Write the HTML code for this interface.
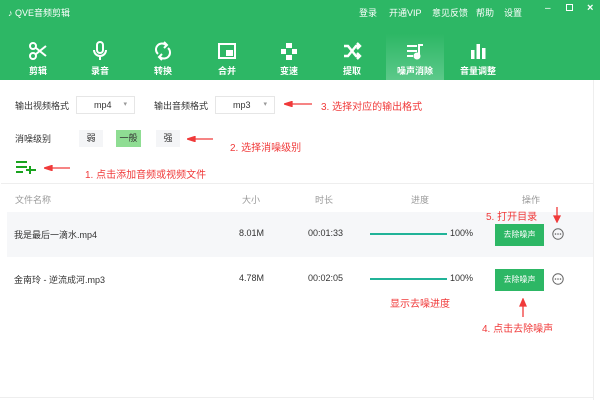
<!DOCTYPE html>
<html><head><meta charset="utf-8"><style>
*{margin:0;padding:0;box-sizing:border-box}
body{width:600px;height:400px;overflow:hidden;background:#fff;font-family:"Liberation Sans","Noto Sans CJK SC",sans-serif;position:relative;font-size:9px;color:#333}
.a{position:absolute;white-space:nowrap}
.hd{position:absolute;left:0;top:0;width:600px;height:80px;background:#2db765;color:#fff}
.tab{position:absolute;top:34px;width:58px;height:46px;text-align:center;font-size:9px;font-weight:bold;color:#fff}
.tab svg{display:block;margin:7px auto 3px}
.red{color:#f03a3a;font-size:10px}
.sel{position:absolute;height:18px;border:1px solid #e6e6e6;background:#fff;font-size:9px;line-height:16px;padding-left:17px}
.sel:after{content:"▾";position:absolute;right:7px;color:#999;font-size:7px}
.btn{position:absolute;width:49px;height:22px;background:#2db765;color:#fff;font-size:8px;text-align:center;line-height:22px}
.bar{position:absolute;height:2px;background:#21b398;width:77px}
.gray{color:#999}
</style></head><body>
<div class="hd">
<div class="a" style="left:8px;top:6px;font-size:9px">♪ QVE音频剪辑</div>
<div class="a" style="left:359px;top:6px;font-size:9px">登录</div>
<div class="a" style="left:389px;top:6px;font-size:9px">开通VIP</div>
<div class="a" style="left:432px;top:6px;font-size:9px">意见反馈</div>
<div class="a" style="left:476px;top:6px;font-size:9px">帮助</div>
<div class="a" style="left:504px;top:6px;font-size:9px">设置</div>
<div class="a" style="left:545px;top:3px;font-size:10px">–</div>
<div class="a" style="left:566px;top:4px;width:7px;height:7px;border:1px solid #fff"></div>
<div class="a" style="left:587px;top:2px;font-size:11px;font-weight:bold">×</div>
<div class="tab" style="left:9px"><svg width="20" height="20" viewBox="0 0 20 20" fill="none" stroke="#fff" stroke-width="2"><circle cx="5" cy="5" r="3"/><circle cx="5" cy="15" r="3"/><path d="M8 7L18 15M8 13L18 5"/></svg>剪辑</div>
<div class="tab" style="left:71px"><svg width="20" height="20" viewBox="0 0 20 20" fill="none" stroke="#fff" stroke-width="2"><rect x="7" y="1" width="6" height="11" rx="3"/><path d="M4 9a6 6 0 0 0 12 0M10 15v4"/></svg>录音</div>
<div class="tab" style="left:134px"><svg width="20" height="20" viewBox="0 0 20 20" fill="none" stroke="#fff" stroke-width="2"><path d="M5 13A6 6 0 0 1 13 4M15 7a6 6 0 0 1-8 9"/><path d="M11 1l3 3-3 3M9 19l-3-3 3-3"/></svg>转换</div>
<div class="tab" style="left:198px"><svg width="20" height="20" viewBox="0 0 20 20" fill="none" stroke="#fff" stroke-width="2"><rect x="2" y="3" width="16" height="14"/><rect x="10" y="10" width="5" height="4" fill="#fff"/></svg>合并</div>
<div class="tab" style="left:260px"><svg width="20" height="20" viewBox="0 0 20 20" fill="#fff"><rect x="7" y="2" width="6" height="5"/><rect x="2" y="8" width="5" height="5"/><rect x="13" y="8" width="5" height="5"/><rect x="7" y="14" width="6" height="5"/></svg>变速</div>
<div class="tab" style="left:323px"><svg width="20" height="20" viewBox="0 0 20 20" fill="none" stroke="#fff" stroke-width="2.4"><path d="M2 5h4l8 10h3M2 15h4l8-10h3M15 2l3 3-3 3M15 12l3 3-3 3"/></svg>提取</div>
<div class="tab" style="left:386px;background:linear-gradient(#2db765,#5cc98a)"><svg width="20" height="20" viewBox="0 0 20 20" fill="none" stroke="#fff" stroke-width="2"><path d="M2 5h10M2 10h10M2 15h6M14 15V4h4"/><circle cx="12" cy="15" r="2.5" fill="#fff"/></svg>噪声消除</div>
<div class="tab" style="left:449px"><svg width="20" height="20" viewBox="0 0 20 20" fill="#fff"><rect x="3" y="9" width="3.5" height="9"/><rect x="8.5" y="3" width="3.5" height="15"/><rect x="14" y="7" width="3.5" height="11"/></svg>音量调整</div>
</div>
<div class="a" style="left:15px;top:99px">输出视频格式</div>
<div class="sel" style="left:76px;top:96px;width:59px">mp4</div>
<div class="a" style="left:154px;top:99px">输出音频格式</div>
<div class="sel" style="left:215px;top:96px;width:60px">mp3</div>
<svg class="a" style="left:284px;top:101px" width="28" height="6"><path d="M0 3L8 0.5V5.5Z M6 3H28" fill="#f03a3a" stroke="#f03a3a" stroke-width="1.3"/></svg>
<div class="a red" style="left:321px;top:98px">3. 选择对应的输出格式</div>
<div class="a" style="left:15px;top:132px">消噪级别</div>
<div class="a" style="left:79px;top:130px;width:24px;height:17px;background:#f4f5f7;text-align:center;line-height:17px">弱</div>
<div class="a" style="left:116px;top:130px;width:25px;height:17px;background:#8fdd93;text-align:center;line-height:17px">一般</div>
<div class="a" style="left:156px;top:130px;width:24px;height:17px;background:#f4f5f7;text-align:center;line-height:17px">强</div>
<svg class="a" style="left:187px;top:136px" width="26" height="6"><path d="M0 3L8 0.5V5.5Z M6 3H26" fill="#f03a3a" stroke="#f03a3a" stroke-width="1.3"/></svg>
<div class="a red" style="left:230px;top:139px">2. 选择消噪级别</div>
<svg class="a" style="left:15px;top:160px" width="22" height="14" viewBox="0 0 22 14" fill="none" stroke="#1aa31f" stroke-width="2"><path d="M1 2h11M1 7h11M1 12h7M15 6v8M11 10h10"/></svg>
<svg class="a" style="left:44px;top:165px" width="26" height="6"><path d="M0 3L8 0.5V5.5Z M6 3H26" fill="#f03a3a" stroke="#f03a3a" stroke-width="1.3"/></svg>
<div class="a red" style="left:85px;top:166px">1. 点击添加音频或视频文件</div>
<div class="a" style="left:1px;top:183px;width:592px;height:1px;background:#eee"></div>
<div class="a gray" style="left:15px;top:193px">文件名称</div>
<div class="a gray" style="left:242px;top:193px">大小</div>
<div class="a gray" style="left:315px;top:193px">时长</div>
<div class="a gray" style="left:411px;top:193px">进度</div>
<div class="a gray" style="left:522px;top:193px">操作</div>
<div class="a" style="left:7px;top:212px;width:586px;height:45px;background:#f6f7f9"></div>
<div class="a" style="left:14px;top:228px">我是最后一滴水.mp4</div>
<div class="a" style="left:239px;top:228px">8.01M</div>
<div class="a" style="left:308px;top:228px">00:01:33</div>
<div class="bar" style="left:370px;top:233px"></div>
<div class="a" style="left:450px;top:228px">100%</div>
<div class="btn" style="left:495px;top:224px">去除噪声</div>
<svg class="a" style="left:552px;top:228px" width="12" height="12"><circle cx="6" cy="6" r="5.2" fill="none" stroke="#666"/><circle cx="3.5" cy="6" r=".8" fill="#666"/><circle cx="6" cy="6" r=".8" fill="#666"/><circle cx="8.5" cy="6" r=".8" fill="#666"/></svg>
<div class="a red" style="left:486px;top:208px">5. 打开目录</div>
<svg class="a" style="left:553px;top:207px" width="8" height="16"><path d="M4 0V12M1 9L4 15L7 9Z" fill="#f03a3a" stroke="#f03a3a" stroke-width="1.3"/></svg>
<div class="a" style="left:14px;top:273px">金南玲 - 逆流成河.mp3</div>
<div class="a" style="left:239px;top:273px">4.78M</div>
<div class="a" style="left:308px;top:273px">00:02:05</div>
<div class="bar" style="left:370px;top:278px"></div>
<div class="a" style="left:450px;top:273px">100%</div>
<div class="btn" style="left:495px;top:269px">去除噪声</div>
<svg class="a" style="left:552px;top:273px" width="12" height="12"><circle cx="6" cy="6" r="5.2" fill="none" stroke="#666"/><circle cx="3.5" cy="6" r=".8" fill="#666"/><circle cx="6" cy="6" r=".8" fill="#666"/><circle cx="8.5" cy="6" r=".8" fill="#666"/></svg>
<div class="a red" style="left:390px;top:295px">显示去噪进度</div>
<svg class="a" style="left:519px;top:298px" width="8" height="19"><path d="M4 19V4M1 8L4 1L7 8Z" fill="#f03a3a" stroke="#f03a3a" stroke-width="1.3"/></svg>
<div class="a red" style="left:482px;top:320px">4. 点击去除噪声</div>
<div class="a" style="left:593px;top:80px;width:1px;height:320px;background:#eee"></div>
<div class="a" style="left:0;top:397px;width:594px;height:1px;background:#eee"></div>
</body></html>
